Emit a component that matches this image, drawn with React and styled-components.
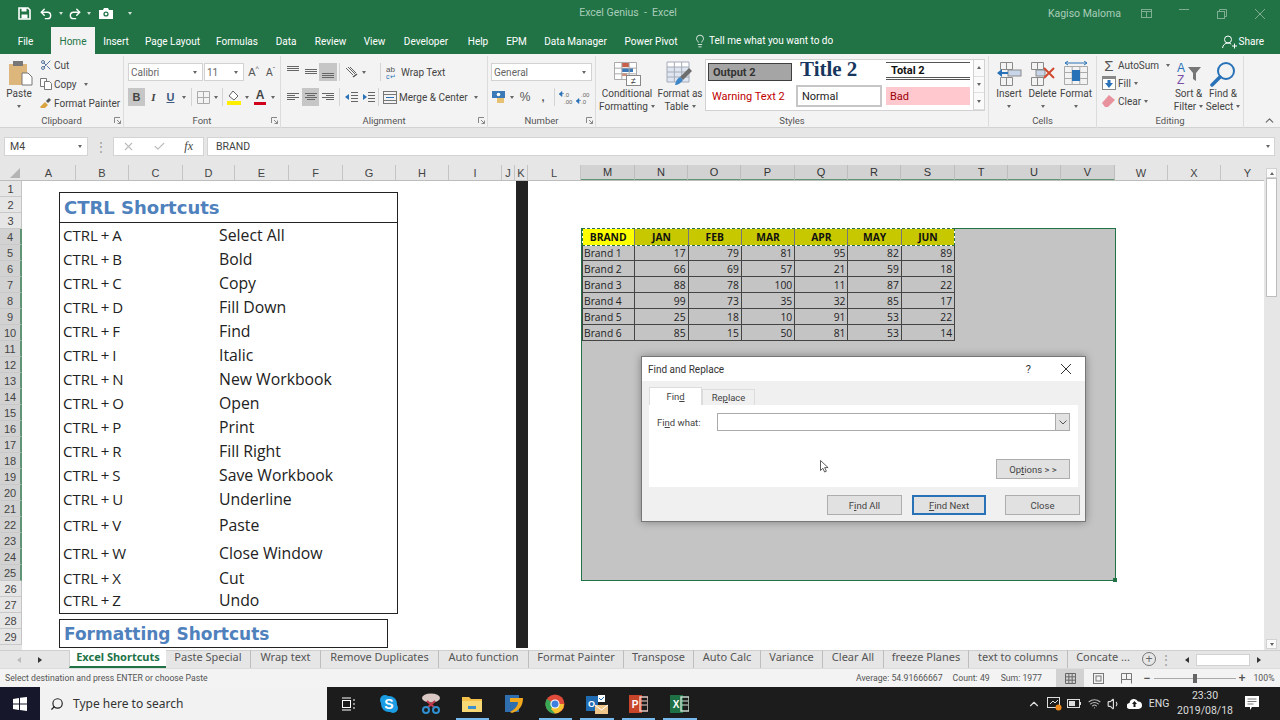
import React from 'react';
import styled, { createGlobalStyle } from 'styled-components';
import { Undo2, Redo2, Lightbulb, Search, ChevronUp, Volume1, Wifi, Scissors, Check, X } from 'lucide-react';

const UI = 'Roboto, "Noto Sans", sans-serif';
const NOTO = '"Noto Sans", "Open Sans", sans-serif';

const GlobalStyle = createGlobalStyle`
  html, body { margin: 0; padding: 0; background: #fff; }
  * { box-sizing: border-box; }
  svg { display: block; flex-shrink: 0; }
`;

// ===================== data ===================== //

const TABS = [
  ['File', 51], ['Home', 44, true], ['Insert', 42], ['Page Layout', 71], ['Formulas', 58], ['Data', 40],
  ['Review', 49], ['View', 39], ['Developer', 64], ['Help', 40], ['EPM', 37], ['Data Manager', 81], ['Power Pivot', 70],
];

const COLS = [
  ['A', 54], ['B', 53], ['C', 54], ['D', 52], ['E', 54], ['F', 54], ['G', 53], ['H', 53], ['I', 53], ['J', 13], ['K', 13], ['L', 53],
  ['M', 54, 1], ['N', 53, 1], ['O', 53, 1], ['P', 54, 1], ['Q', 53, 1], ['R', 53, 1], ['S', 54, 1], ['T', 53, 1], ['U', 53, 1], ['V', 54, 1],
  ['W', 53], ['X', 53], ['Y', 54],
];

const SHORTCUTS = [
  ['CTRL + A', 'Select All', 24], ['CTRL + B', 'Bold', 24], ['CTRL + C', 'Copy', 24], ['CTRL + D', 'Fill Down', 24],
  ['CTRL + F', 'Find', 24], ['CTRL + I', 'Italic', 24], ['CTRL + N', 'New Workbook', 24], ['CTRL + O', 'Open', 24],
  ['CTRL + P', 'Print', 24], ['CTRL + R', 'Fill Right', 24], ['CTRL + S', 'Save Workbook', 24], ['CTRL + U', 'Underline', 24],
  ['CTRL + V', 'Paste', 28], ['CTRL + W', 'Close Window', 28], ['CTRL + X', 'Cut', 20], ['CTRL + Z', 'Undo', 25],
];

const HEAD = ['BRAND', 'JAN', 'FEB', 'MAR', 'APR', 'MAY', 'JUN'];
const BRANDS = [
  ['Brand 1', 17, 79, 81, 95, 82, 89],
  ['Brand 2', 66, 69, 57, 21, 59, 18],
  ['Brand 3', 88, 78, 100, 11, 87, 22],
  ['Brand 4', 99, 73, 35, 32, 85, 17],
  ['Brand 5', 25, 18, 10, 91, 53, 22],
  ['Brand 6', 85, 15, 50, 81, 53, 14],
];

const SHEETS = [
  ['Excel Shortcuts', 97, true], ['Paste Special', 85], ['Wrap text', 70], ['Remove Duplicates', 118], ['Auto function', 90],
  ['Format Painter', 95], ['Transpose', 70], ['Auto Calc', 67], ['Variance', 62], ['Clear All', 61], ['freeze Planes', 85],
  ['text to columns', 99], ['Concate ...', 70],
];

// ===================== small drawings ===================== //

const Grid = ({ x, y, w, h, c = 3, r = 3, stroke = '#8a8a8a' }) => {
  const lines = [];
  for (let i = 0; i <= c; i++) lines.push(<line key={'c' + i} x1={x + (w * i) / c} x2={x + (w * i) / c} y1={y} y2={y + h} />);
  for (let i = 0; i <= r; i++) lines.push(<line key={'r' + i} x1={x} x2={x + w} y1={y + (h * i) / r} y2={y + (h * i) / r} />);
  return <g stroke={stroke} strokeWidth="1" fill="none">{lines}</g>;
};

const Bars = ({ rows }) => (
  <svg width="14" height="14" viewBox="0 0 14 14" stroke="#666" strokeWidth="1">
    {rows.map(([a, b, y]) => <line key={y} x1={a} x2={b} y1={y + 0.5} y2={y + 0.5} />)}
  </svg>
);

const SaveIcon = () => (
  <svg width="13" height="13" viewBox="0 0 13 13">
    <path d="M1 1h9l2 2v9H1z" fill="none" stroke="#fff" strokeWidth="1.6" />
    <rect x="3.5" y="1" width="5" height="3.5" fill="#fff" />
    <rect x="3.5" y="7.5" width="6" height="4" fill="#fff" />
  </svg>
);

const CameraIcon = () => (
  <svg width="14" height="11" viewBox="0 0 14 11">
    <path d="M0 2h4l1-2h4l1 2h4v9H0z" fill="#fff" />
    <circle cx="7" cy="6" r="2.6" fill="#217346" />
    <circle cx="7" cy="6" r="1.3" fill="#fff" />
  </svg>
);

const PasteIcon = () => (
  <svg width="24" height="25" viewBox="0 0 24 25">
    <rect x="0" y="3" width="18" height="21" fill="#dcb67a" />
    <rect x="4" y="0" width="10" height="5" fill="#777" />
    <path d="M13 12h6l4 4v8H13z" fill="#fff" stroke="#777" />
  </svg>
);

const CopyIcon = () => (
  <svg width="12" height="12" viewBox="0 0 12 12" fill="#fff" stroke="#777">
    <path d="M.5.5h6v8h-6z" /><path d="M4.5 3.5h5l2 2v6h-7z" />
  </svg>
);

const BrushIcon = () => (
  <svg width="12" height="12" viewBox="0 0 12 12">
    <path d="M0 10l5-5 3 3-3 3H1z" fill="#d9a441" />
    <path d="M6 4l3-3 2 2-3 3z" fill="#555" />
  </svg>
);

const BordersIcon = () => (
  <svg width="13" height="13" viewBox="0 0 13 13"><Grid x={0.5} y={0.5} w={12} h={12} c={2} r={2} stroke="#aaa" /></svg>
);

const FillIcon = () => (
  <svg width="14" height="15" viewBox="0 0 14 15">
    <path d="M6 1l5 5-4 4-5-4z" fill="#fff" stroke="#666" />
    <rect x="0" y="11" width="14" height="4" fill="#ffee00" />
  </svg>
);

const OrientationIcon = () => (
  <svg width="13" height="13" viewBox="0 0 13 13" fill="none" stroke="#666">
    <path d="M1 2l7 7M3 1l7 7M5 1l6 6" />
    <path d="M8 11l4-3" stroke="#555" strokeWidth="1.5" />
  </svg>
);

const IndentIcon = ({ flip }) => (
  <svg width="13" height="12" viewBox="0 0 13 12">
    <g stroke="#666"><path d="M6 1.5h7M6 4.5h7M6 7.5h7M6 10.5h7" /></g>
    <path d={flip ? 'M5 6L1 3v6z' : 'M0 6l4-3v6z'} fill="#2a72b8" />
  </svg>
);

const WrapIcon = () => (
  <svg width="12" height="15" viewBox="0 0 12 15">
    <text x="0" y="7" fontFamily="Liberation Sans, sans-serif" fontSize="8" fill="#555">ab</text>
    <text x="0" y="14" fontFamily="Liberation Sans, sans-serif" fontSize="7" fill="#2a72b8">c↵</text>
  </svg>
);

const MergeIcon = () => (
  <svg width="14" height="13" viewBox="0 0 14 13" fill="none" stroke="#777">
    <rect x=".5" y=".5" width="13" height="12" />
    <path d="M.5 3.5h13M.5 9.5h13" />
    <path d="M3 6.5h8" stroke="#2a72b8" />
  </svg>
);

const AccountIcon = () => (
  <svg width="14" height="14" viewBox="0 0 14 14">
    <rect x="0" y="1" width="13" height="7" fill="#3a7ab8" />
    <circle cx="6.5" cy="4.5" r="1.8" fill="#fff" />
    <rect x="5" y="8" width="7" height="5" fill="#e7c172" />
  </svg>
);

const DecimalIcon = ({ dir }) => (
  <svg width="15" height="13" viewBox="0 0 15 13">
    <text x="5" y="5.5" fontFamily="Liberation Sans, sans-serif" fontSize="6" fill="#666">{dir ? '.0' : '.00'}</text>
    <text x="5" y="12.5" fontFamily="Liberation Sans, sans-serif" fontSize="6" fill="#666">{dir ? '.00' : '.0'}</text>
    <path d={dir ? 'M0 3l3-2.5v5zM3 2.5h2' : 'M0 10l3-2.5v5zM3 9.5h2'} fill="#2a72b8" stroke="#2a72b8" strokeWidth=".6" />
  </svg>
);

const CondIcon = () => (
  <svg width="27" height="24" viewBox="0 0 27 24">
    <rect x="0.5" y="0.5" width="22" height="17" fill="#fff" />
    <rect x="8" y="1" width="7" height="4" fill="#c9604a" />
    <rect x="8" y="6" width="11" height="4" fill="#3b78b8" />
    <rect x="8" y="11" width="5" height="3" fill="#d98b70" />
    <Grid x={0.5} y={0.5} w={22} h={17} c={3} r={3} stroke="#aaa" />
    <rect x="12.5" y="13.5" width="14" height="10" fill="#fff" stroke="#888" />
    <text x="19.5" y="22" textAnchor="middle" fontFamily="Liberation Sans, sans-serif" fontSize="9" fill="#444">≠</text>
  </svg>
);

const TableIcon = () => (
  <svg width="28" height="25" viewBox="0 0 28 25">
    <rect x="1" y="1" width="22" height="20" fill="#dfe6f1" />
    <rect x="1" y="1" width="22" height="5" fill="#fff" />
    <Grid x={1} y={1} w={22} h={20} c={3} r={4} stroke="#a4acb8" />
    <path d="M14 16l9-9 3 3-9 9z" fill="#6d6d6d" />
    <path d="M9 24c1-5 3-7 5-8l3 3c-2 3-5 5-8 5z" fill="#3f86c9" />
  </svg>
);

const InsertIcon = () => (
  <svg width="25" height="24" viewBox="0 0 25 24">
    <Grid x={3.5} y={0.5} w={12} h={7} c={2} r={1} />
    <Grid x={3.5} y={15.5} w={12} h={8} c={2} r={1} />
    <rect x="11" y="8" width="13" height="6" fill="#c7d6e8" stroke="#8a8a8a" />
    <path d="M0 11l5-4v3h6v2H5v3z" fill="#2a72b8" />
  </svg>
);

const DeleteIcon = () => (
  <svg width="25" height="24" viewBox="0 0 25 24">
    <Grid x={1.5} y={0.5} w={12} h={7} c={2} r={1} />
    <Grid x={1.5} y={15.5} w={12} h={8} c={2} r={1} />
    <rect x="6" y="8" width="9" height="6" fill="#c7d6e8" stroke="#8a8a8a" />
    <path d="M14 6l10 10M24 6L14 16" stroke="#d0492f" strokeWidth="2" />
  </svg>
);

const FormatIcon = () => (
  <svg width="24" height="25" viewBox="0 0 24 25">
    <path d="M1 2h22M1 2l3-2M1 2l3 2M23 2l-3-2M23 2l-3 2" stroke="#2a72b8" fill="none" />
    <Grid x={0.5} y={5.5} w={23} h={18} c={3} r={3} stroke="#aaa" />
    <rect x="8" y="9" width="8" height="11" fill="#2a72b8" />
  </svg>
);

const FillDownIcon = () => (
  <svg width="14" height="14" viewBox="0 0 14 14">
    <rect x=".5" y=".5" width="13" height="13" fill="#fff" stroke="#888" />
    <rect x="0" y="0" width="14" height="3" fill="#888" />
    <path d="M7 12L3 7h2.5V4h3v3H11z" fill="#2a72b8" />
  </svg>
);

const EraserIcon = () => (
  <svg width="14" height="12" viewBox="0 0 14 12">
    <path d="M0 8l7-8 6 5-7 7H3z" fill="#e8929e" />
  </svg>
);

const SortIcon = () => (
  <svg width="26" height="25" viewBox="0 0 26 25">
    <text x="1" y="11" fontFamily="Liberation Sans, sans-serif" fontSize="12" fill="#2a72b8">A</text>
    <text x="1" y="23" fontFamily="Liberation Sans, sans-serif" fontSize="12" fill="#7a4fa8">Z</text>
    <path d="M12 6h13l-5 6v8l-3-2v-6z" fill="#777" />
  </svg>
);

const FindIcon = () => (
  <svg width="26" height="26" viewBox="0 0 26 26" fill="none">
    <circle cx="16" cy="10" r="8" stroke="#2a72b8" strokeWidth="2" />
    <path d="M10 16l-8 8" stroke="#2a72b8" strokeWidth="3.5" strokeLinecap="round" />
  </svg>
);

const ShareIcon = () => (
  <svg width="15" height="14" viewBox="0 0 15 14" fill="none" stroke="#fff">
    <circle cx="6" cy="4.5" r="3.5" /><path d="M.5 13c.5-3 2.5-5 5.5-5 1.5 0 2.5.5 3.2 1.2M10 11h5M12.5 8.5v5" />
  </svg>
);

const Launcher = () => (
  <svg width="7" height="7" viewBox="0 0 7 7" fill="none" stroke="#888">
    <path d="M.5 6V.5H6" /><path d="M3 3l3.5 3.5M6.5 3.5v3h-3" />
  </svg>
);

const WinLogo = () => (
  <svg width="14" height="14" viewBox="0 0 14 14" fill="#fff">
    <path d="M0 2l6-1v5.5H0zM7 .8L14 0v6.5H7zM0 7.5h6V13l-6-1zM7 7.5h7V14l-7-1z" />
  </svg>
);

const TaskView = () => (
  <svg width="14" height="14" viewBox="0 0 14 14" fill="none" stroke="#fff">
    <rect x="1.5" y="3.5" width="8" height="7" /><path d="M1 1h9M1 13h9M13 2v2M13 6v2M13 10v2" />
  </svg>
);

const Skype = () => (
  <svg width="20" height="20" viewBox="0 0 20 20">
    <circle cx="6" cy="6" r="5" fill="#1b9ce3" /><circle cx="14" cy="14" r="5" fill="#1b9ce3" /><circle cx="10" cy="10" r="8" fill="#1b9ce3" />
    <text x="10" y="15" textAnchor="middle" fontFamily="Liberation Sans, sans-serif" fontWeight="700" fontSize="14" fill="#fff">S</text>
  </svg>
);

const Snip = () => (
  <svg width="20" height="22" viewBox="0 0 20 22">
    <ellipse cx="10" cy="5" rx="9" ry="4.5" fill="#d9c8c4" />
    <path d="M6 8l8 7M14 8l-8 7" stroke="#c23b4c" strokeWidth="2" />
    <circle cx="5" cy="17" r="3" fill="none" stroke="#2f8fd0" strokeWidth="2" /><circle cx="15" cy="17" r="3" fill="none" stroke="#2f8fd0" strokeWidth="2" />
  </svg>
);

const Folder = () => (
  <svg width="20" height="16" viewBox="0 0 20 16">
    <path d="M0 1h7l2 2h11v13H0z" fill="#f3c14b" /><rect y="5" width="20" height="11" fill="#f8d775" />
    <rect x="6" y="10" width="8" height="3" fill="#3a8fd0" />
  </svg>
);

const Planner = () => (
  <svg width="20" height="20" viewBox="0 0 20 20">
    <rect x="1" y="1" width="14" height="17" fill="#2f6fb0" />
    <path d="M6 4h13c0 8-4 13-11 15l-2-1c6-3 8-7 8-10H6z" fill="#f2a81d" />
  </svg>
);

const Chrome = () => (
  <svg width="20" height="20" viewBox="0 0 20 20">
    <circle cx="10" cy="10" r="9.5" fill="#e04a3a" />
    <path d="M10 10L1.8 5A9.5 9.5 0 0 0 10 19.5l5-9.5z" fill="#3aa757" />
    <path d="M10 10h9a9.5 9.5 0 0 1-9 9.5L6 15z" fill="#f5c332" />
    <circle cx="10" cy="10" r="4.6" fill="#fff" /><circle cx="10" cy="10" r="3.5" fill="#3f7fe0" />
  </svg>
);

const Outlook = () => (
  <svg width="22" height="20" viewBox="0 0 22 20">
    <rect x="0" y="2" width="12" height="15" fill="#1f6cb3" />
    <text x="5.5" y="13" textAnchor="middle" fontFamily="Liberation Sans, sans-serif" fontWeight="700" fontSize="9" fill="#fff">O</text>
    <rect x="12" y="1" width="7" height="7" fill="#fff" /><path d="M13 4l2 2 3-3" stroke="#1f6cb3" fill="none" />
    <path d="M9 11h13v9H9z" fill="#f0c68a" /><path d="M9 11l6.5 5 6.5-5" fill="none" stroke="#fff" />
  </svg>
);

const Office = ({ bg, page, label }) => (
  <svg width="19" height="18" viewBox="0 0 19 18">
    <rect x="0" y="0" width="13" height="18" fill={bg} />
    <rect x="11" y="2" width="8" height="14" fill="none" stroke={page} strokeWidth="1.4" />
    <path d={`M12 6h6M12 10h6`} stroke={page} />
    <text x="6" y="13" textAnchor="middle" fontFamily="Liberation Sans, sans-serif" fontWeight="700" fontSize="10" fill="#fff">{label}</text>
  </svg>
);

const TrayMeter = () => (
  <svg width="15" height="15" viewBox="0 0 15 15" fill="none" stroke="#ddd">
    <rect x=".5" y="1.5" width="12" height="10" /><path d="M3 8l3-3 2 2 3-3" />
    <circle cx="11.5" cy="11.5" r="3" fill="#f08a1d" stroke="none" />
  </svg>
);

const Battery = () => (
  <svg width="14" height="9" viewBox="0 0 14 9">
    <rect x=".5" y=".5" width="12" height="8" fill="none" stroke="#ddd" /><rect x="2" y="2" width="6" height="5" fill="#ddd" /><rect x="13" y="3" width="1" height="3" fill="#ddd" />
  </svg>
);

const Cloud = () => (
  <svg width="15" height="11" viewBox="0 0 15 11">
    <path d="M3 11a3 3 0 0 1-.5-6A4.5 4.5 0 0 1 11 3.5 3.7 3.7 0 0 1 11.5 11z" fill="#fff" />
    <path d="M7.5 3L5 6h1.5v3h2V6H10z" fill="#1b1b1b" />
  </svg>
);

const Notif = () => (
  <svg width="15" height="15" viewBox="0 0 15 15">
    <path d="M0 0h14v11H7l-2 3v-3H0z" fill="#fff" /><path d="M2.5 3h9M2.5 5.5h9M2.5 8h6" stroke="#777" />
  </svg>
);

const Pointer = () => (
  <svg width="9" height="13" viewBox="0 0 9 13">
    <path d="M.5.5v10l2.4-2.2L4.6 12l1.8-.8-1.7-3.6h3.4z" fill="#fff" stroke="#333" strokeWidth=".8" />
  </svg>
);

// ===================== App ===================== //

function App() {
  const rows = Array.from({ length: 29 }, (_, i) => i + 1);
  return (
    <Page>
      <GlobalStyle />

      <TitleBar>
        <Qat>
          <QatSlot $w={24}><SaveIcon /></QatSlot>
          <QatSlot $w={20}><Undo2 size={14} color="#fff" strokeWidth={2.4} /></QatSlot>
          <QatSlot $w={10}><Caret $c="#cfe3d7" /></QatSlot>
          <QatSlot $w={18}><Redo2 size={14} color="#fff" strokeWidth={2.4} /></QatSlot>
          <QatSlot $w={10}><Caret $c="#cfe3d7" /></QatSlot>
          <QatSlot $w={24}><CameraIcon /></QatSlot>
          <QatSlot $w={24}><Caret $c="#cfe3d7" /></QatSlot>
        </Qat>
        <DocTitle>Excel Genius&nbsp; -&nbsp; Excel</DocTitle>
        <Account>Kagiso Maloma</Account>
        <WinControls>
          <WinBtn><svg width="11" height="9" viewBox="0 0 11 9" fill="none" stroke="#7fae93"><rect x=".5" y=".5" width="10" height="8" /><path d="M.5 2.5h10M5.5 2.5v6" /></svg></WinBtn>
          <WinBtn><svg width="10" height="1"><rect width="10" height="1" fill="#7fae93" /></svg></WinBtn>
          <WinBtn><svg width="10" height="10" viewBox="0 0 10 10" fill="none" stroke="#7fae93"><rect x=".5" y="2.5" width="7" height="7" /><path d="M2.5 2V.5h7v7H8" /></svg></WinBtn>
          <WinBtn><svg width="10" height="10" viewBox="0 0 10 10" stroke="#7fae93"><path d="M0 0l10 10M10 0L0 10" /></svg></WinBtn>
        </WinControls>
      </TitleBar>

      <TabBar>
        {TABS.map(([name, w, active]) => <Tab key={name} $w={w} $active={active}>{name}</Tab>)}
        <TellMe><Lightbulb size={14} color="#fff" strokeWidth={1.4} />Tell me what you want to do</TellMe>
        <Share><ShareIcon />Share</Share>
      </TabBar>

      <Ribbon>
        <Group $w={124}>
          <Body>
            <BigBtn $w={38}><BigIcon $shift={2}><PasteIcon /></BigIcon><BigText>Paste</BigText><BigText><Caret /></BigText></BigBtn>
            <Stack>
              <SmallRow><SmallIcon><Scissors size={12} color="#5a78a0" /></SmallIcon>Cut</SmallRow>
              <SmallRow><SmallIcon><CopyIcon /></SmallIcon>Copy<Caret $m={7} /></SmallRow>
              <SmallRow><SmallIcon><BrushIcon /></SmallIcon>Format Painter</SmallRow>
            </Stack>
          </Body>
          <GroupLabel>Clipboard<LaunchSpot><Launcher /></LaunchSpot></GroupLabel>
        </Group>

        <Group $w={157}>
          <Tools $left={4}>
            <ToolRow>
              <Combo $w={75}>Calibri<Caret /></Combo>
              <Combo $w={40} $ml={1}>11<Caret /></Combo>
              <IconBtn $w={17} $ml={1}><GrowA>A<sup>^</sup></GrowA></IconBtn>
              <IconBtn $w={17}><GrowA $small>A<sup>ˇ</sup></GrowA></IconBtn>
            </ToolRow>
            <ToolRow>
              <IconBtn $w={17} $on><FaceB>B</FaceB></IconBtn>
              <IconBtn $w={17}><FaceI>I</FaceI></IconBtn>
              <IconBtn $w={17}><FaceU>U</FaceU></IconBtn>
              <IconBtn $w={10}><Caret /></IconBtn>
              <Sep $m={2} />
              <IconBtn $w={18}><BordersIcon /></IconBtn>
              <IconBtn $w={8}><Caret /></IconBtn>
              <Sep $m={2} />
              <IconBtn $w={18}><FillIcon /></IconBtn>
              <IconBtn $w={8}><Caret /></IconBtn>
              <IconBtn $w={18}><FontColor>A</FontColor></IconBtn>
              <IconBtn $w={8}><Caret /></IconBtn>
            </ToolRow>
          </Tools>
          <GroupLabel>Font<LaunchSpot><Launcher /></LaunchSpot></GroupLabel>
        </Group>

        <Group $w={207}>
          <Tools $left={3}>
            <ToolRow>
              <IconBtn $w={18}><Bars rows={[[1, 13, 1], [1, 13, 3], [1, 13, 5]]} /></IconBtn>
              <IconBtn $w={17}><Bars rows={[[1, 13, 4], [1, 13, 6], [1, 13, 8]]} /></IconBtn>
              <IconBtn $w={18} $on><Bars rows={[[1, 13, 8], [1, 13, 10], [1, 13, 12]]} /></IconBtn>
              <Sep $m={2} />
              <IconBtn $w={18}><OrientationIcon /></IconBtn>
              <IconBtn $w={8}><Caret /></IconBtn>
              <Sep $m={3} $ml={12} />
              <SmallIcon $w={15}><WrapIcon /></SmallIcon>
              <PlainText $ml={1}>Wrap Text</PlainText>
            </ToolRow>
            <ToolRow>
              <IconBtn $w={18}><Bars rows={[[1, 13, 3], [1, 9, 5], [1, 13, 7], [1, 9, 9]]} /></IconBtn>
              <IconBtn $w={17} $on><Bars rows={[[1, 13, 3], [3, 11, 5], [1, 13, 7], [3, 11, 9]]} /></IconBtn>
              <IconBtn $w={18}><Bars rows={[[1, 13, 3], [5, 13, 5], [1, 13, 7], [5, 13, 9]]} /></IconBtn>
              <Sep $m={2} />
              <IconBtn $w={18}><IndentIcon /></IconBtn>
              <IconBtn $w={17}><IndentIcon flip /></IconBtn>
              <Sep $m={3} $ml={1} />
              <SmallIcon $w={15}><MergeIcon /></SmallIcon>
              <PlainText $ml={1}>Merge &amp; Center</PlainText>
              <Caret $m={6} />
            </ToolRow>
          </Tools>
          <GroupLabel>Alignment<LaunchSpot><Launcher /></LaunchSpot></GroupLabel>
        </Group>

        <Group $w={108}>
          <Tools $left={3}>
            <ToolRow><Combo $w={101}>General<Caret /></Combo></ToolRow>
            <ToolRow>
              <IconBtn $w={16}><AccountIcon /></IconBtn>
              <IconBtn $w={9}><Caret /></IconBtn>
              <IconBtn $w={18}><Percent>%</Percent></IconBtn>
              <IconBtn $w={18}><Percent $small>,</Percent></IconBtn>
              <Sep $m={2} />
              <IconBtn $w={18}><DecimalIcon dir /></IconBtn>
              <IconBtn $w={16}><DecimalIcon /></IconBtn>
            </ToolRow>
          </Tools>
          <GroupLabel>Number<LaunchSpot><Launcher /></LaunchSpot></GroupLabel>
        </Group>

        <Group $w={393}>
          <Body $left={3}>
            <BigBtn $w={56}><BigIcon><CondIcon /></BigIcon><BigText>Conditional</BigText><BigText>Formatting<Caret $m={3} /></BigText></BigBtn>
            <BigBtn $w={50}><BigIcon><TableIcon /></BigIcon><BigText>Format as</BigText><BigText>Table<Caret $m={3} /></BigText></BigBtn>
            <Gallery>
              <StyleCell $kind="output">Output 2</StyleCell>
              <StyleCell $kind="title">Title 2</StyleCell>
              <StyleCell $kind="total">Total 2</StyleCell>
              <StyleCell $kind="warning">Warning Text 2</StyleCell>
              <StyleCell $kind="normal">Normal</StyleCell>
              <StyleCell $kind="bad">Bad</StyleCell>
              <GalleryScroll>
                <GalleryArrow><Caret $up /></GalleryArrow>
                <GalleryArrow><Caret /></GalleryArrow>
                <GalleryArrow><Caret /></GalleryArrow>
              </GalleryScroll>
            </Gallery>
          </Body>
          <GroupLabel>Styles</GroupLabel>
        </Group>

        <Group $w={108}>
          <Body $left={3}>
            <BigBtn $w={34}><BigIcon><InsertIcon /></BigIcon><BigText>Insert</BigText><BigText><Caret /></BigText></BigBtn>
            <BigBtn $w={33}><BigIcon><DeleteIcon /></BigIcon><BigText>Delete</BigText><BigText><Caret /></BigText></BigBtn>
            <BigBtn $w={34}><BigIcon><FormatIcon /></BigIcon><BigText>Format</BigText><BigText><Caret /></BigText></BigBtn>
          </Body>
          <GroupLabel>Cells</GroupLabel>
        </Group>

        <Group $w={147} $last>
          <Body $left={4}>
            <EditStack>
              <SmallRow><SmallIcon $w={16}><Sigma>Σ</Sigma></SmallIcon>AutoSum<Caret $m={7} /></SmallRow>
              <SmallRow><SmallIcon $w={16}><FillDownIcon /></SmallIcon>Fill<Caret $m={3} /></SmallRow>
              <SmallRow><SmallIcon $w={16}><EraserIcon /></SmallIcon>Clear<Caret $m={3} /></SmallRow>
            </EditStack>
            <BigBtn $w={35}><BigIcon><SortIcon /></BigIcon><BigText>Sort &amp;</BigText><BigText>Filter<Caret $m={3} /></BigText></BigBtn>
            <BigBtn $w={34}><BigIcon><FindIcon /></BigIcon><BigText>Find &amp;</BigText><BigText>Select<Caret $m={3} /></BigText></BigBtn>
          </Body>
          <GroupLabel>Editing</GroupLabel>
        </Group>

        <Collapse><ChevronUp size={13} color="#666" /></Collapse>
      </Ribbon>

      <FormulaBar>
        <NameBox>M4<Caret /></NameBox>
        <GripDots>⋮</GripDots>
        <FormulaBtns>
          <X size={13} color="#bbb" />
          <Check size={13} color="#bbb" />
          <Fx>fx</Fx>
        </FormulaBtns>
        <FormulaInput>BRAND<Caret /></FormulaInput>
      </FormulaBar>

      <SheetArea>
        <SheetMain>
          <ColHeaders>
            <Corner />
            {COLS.map(([c, w, sel]) => <ColHead key={c} $w={w} $sel={sel}>{c}</ColHead>)}
          </ColHeaders>
          <SheetBody>
            <RowHeaders>
              {rows.map((n) => <RowHead key={n} $sel={n >= 4 && n <= 25}>{n}</RowHead>)}
            </RowHeaders>
            <Canvas>
              <BlackColumn />

              <ShortcutBox>
                <ShortcutTitle>CTRL Shortcuts</ShortcutTitle>
                {SHORTCUTS.map(([keys, what, h]) => (
                  <ShortcutRow key={keys} $h={h}><KeyName>{keys}</KeyName><span>{what}</span></ShortcutRow>
                ))}
              </ShortcutBox>

              <FormatBox>Formatting Shortcuts</FormatBox>

              <GreyShape>
                <DataTable>
                  <HeadRow>
                    {HEAD.map((h, i) => <HeadCell key={h} $first={i === 0}>{h}</HeadCell>)}
                  </HeadRow>
                  {BRANDS.map((row) => row.map((v, i) => (
                    <DataCell key={row[0] + i} $left={i === 0}>{v}</DataCell>
                  )))}
                </DataTable>
              </GreyShape>

              <Dialog>
                <DialogTitle>
                  Find and Replace
                  <DialogQ>?</DialogQ>
                  <svg width="10" height="10" viewBox="0 0 10 10" stroke="#333"><path d="M0 0l10 10M10 0L0 10" /></svg>
                </DialogTitle>
                <DialogBody>
                  <DialogTabs>
                    <DialogTab $active>Fin<u>d</u></DialogTab>
                    <DialogTab>Re<u>p</u>lace</DialogTab>
                  </DialogTabs>
                  <DialogPanel>
                    <FindRow>
                      <FindLabel>Fi<u>n</u>d what:</FindLabel>
                      <FindInput><FindDrop><svg width="8" height="5" viewBox="0 0 8 5" fill="none" stroke="#555"><path d="M.5.5L4 4 7.5.5" /></svg></FindDrop></FindInput>
                    </FindRow>
                    <OptionsRow><DlgButton $w={74} $h={20}>Op<u>t</u>ions &gt; &gt;</DlgButton></OptionsRow>
                    <CursorSpot><Pointer /></CursorSpot>
                  </DialogPanel>
                  <DialogButtons>
                    <DlgButton $w={75}>F<u>i</u>nd All</DlgButton>
                    <DlgButton $w={74} $ml={10} $primary><u>F</u>ind Next</DlgButton>
                    <DlgButton $w={75} $ml={19}>Close</DlgButton>
                  </DialogButtons>
                </DialogBody>
              </Dialog>
            </Canvas>
          </SheetBody>
        </SheetMain>
        <VScroll>
          <ScrollEnd><Caret $up /></ScrollEnd>
          <VThumb />
          <ScrollEnd><Caret /></ScrollEnd>
        </VScroll>
      </SheetArea>

      <SheetTabs>
        <TabNav><NavArrow $left $dim /><NavArrow /></TabNav>
        {SHEETS.map(([name, w, active], i) => (
          <SheetTab key={name} $w={w} $active={active} $noSep={i === 0 || i === SHEETS.length - 1}>{name}</SheetTab>
        ))}
        <AddSheet>+</AddSheet>
        <GripDots $w={20}>⋮</GripDots>
        <HScroll>
          <NavArrow $left />
          <HThumb />
          <NavArrow />
        </HScroll>
      </SheetTabs>

      <StatusBar>
        <StatusText>Select destination and press ENTER or choose Paste</StatusText>
        <Stat $ml="auto">Average: 54.91666667</Stat>
        <Stat $ml="10px">Count: 49</Stat>
        <Stat $ml="11px">Sum: 1977</Stat>
        <ViewBtn $ml={14} $on><svg width="11" height="11" viewBox="0 0 11 11"><Grid x={0.5} y={0.5} w={10} h={10} c={3} r={3} stroke="#666" /></svg></ViewBtn>
        <ViewBtn><svg width="11" height="11" viewBox="0 0 11 11" fill="none" stroke="#777"><rect x=".5" y=".5" width="10" height="10" /><rect x="3" y="3" width="5" height="5" /></svg></ViewBtn>
        <ViewBtn><svg width="11" height="11" viewBox="0 0 11 11" fill="none" stroke="#777"><path d="M.5 10.5V.5h10v10M5.5.5v6M.5 6.5h10" /></svg></ViewBtn>
        <ZoomMinus>−</ZoomMinus>
        <ZoomTrack><ZoomKnob /></ZoomTrack>
        <ZoomPlus>+</ZoomPlus>
        <ZoomPct>100%</ZoomPct>
      </StatusBar>

      <Taskbar>
        <StartBtn><WinLogo /></StartBtn>
        <SearchBox><SearchGlyph><Search size={14} color="#222" /></SearchGlyph>Type here to search</SearchBox>
        <Slot><TaskView /></Slot>
        <Slot><Skype /></Slot>
        <Slot><Snip /></Slot>
        <Slot $active><Folder /></Slot>
        <Slot><Planner /></Slot>
        <Slot $active><Chrome /></Slot>
        <Slot $active><Outlook /></Slot>
        <Slot $active><Office bg="#c8452a" page="#f2d2c8" label="P" /></Slot>
        <Slot $active><Office bg="#1d7144" page="#cfe6d8" label="X" /></Slot>
        <Tray>
          <TraySlot><ChevronUp size={14} color="#ddd" /></TraySlot>
          <TraySlot><TrayMeter /></TraySlot>
          <TraySlot><Battery /></TraySlot>
          <TraySlot><Wifi size={13} color="#bbb" /></TraySlot>
          <TraySlot><Volume1 size={14} color="#ddd" /></TraySlot>
          <TraySlot><Cloud /></TraySlot>
          <TraySlot $w={30}>ENG</TraySlot>
          <Clock><span>23:30</span><span>2019/08/18</span></Clock>
          <TraySlot $w={32}><Notif /></TraySlot>
          <TraySlot $w={12} />
        </Tray>
      </Taskbar>
    </Page>
  );
}

// ===================== CSS styled-components ===================== //

const Page = styled.div`
  width: 1280px;
  height: 720px;
  overflow: hidden;
  display: flex;
  flex-direction: column;
  font-family: ${UI};
  color: #444;
  background: #e6e6e6;
`;

const Caret = styled.span`
  display: inline-block;
  width: 0;
  height: 0;
  flex-shrink: 0;
  margin-left: ${(p) => p.$m || 0}px;
  border-left: 2.5px solid transparent;
  border-right: 2.5px solid transparent;
  ${(p) => (p.$up ? 'border-bottom' : 'border-top')}: 3px solid ${(p) => p.$c || '#666'};
  vertical-align: middle;
`;

const TitleBar = styled.div`
  height: 27px;
  background: #217346;
  display: flex;
  align-items: center;
  position: relative;
  color: #a9cdb8;
  font-size: 10.5px;
`;

const Qat = styled.div`
  display: flex;
  align-items: center;
  padding-left: 12px;
`;

const QatSlot = styled.div`
  width: ${(p) => p.$w}px;
  display: flex;
  justify-content: center;
`;

const DocTitle = styled.div`
  position: absolute;
  left: 0;
  right: 0;
  top: 6px;
  padding-right: 24px;
  text-align: center;
  white-space: pre;
`;

const Account = styled.div`
  margin-left: auto;
  margin-right: 6px;
`;

const WinControls = styled.div`
  display: flex;
  width: 153px;
`;

const WinBtn = styled.div`
  width: 38px;
  display: flex;
  justify-content: center;
`;

const TabBar = styled.div`
  height: 27px;
  background: #217346;
  display: flex;
  align-items: stretch;
  color: #fff;
  font-size: 10px;
`;

const Tab = styled.div`
  width: ${(p) => p.$w}px;
  display: flex;
  align-items: center;
  justify-content: center;
  background: ${(p) => (p.$active ? '#f3f3f3' : 'transparent')};
  color: ${(p) => (p.$active ? '#217346' : '#fff')};
  padding-top: 1px;
`;

const TellMe = styled.div`
  display: flex;
  align-items: center;
  gap: 2px;
  margin-left: 7px;
`;

const Share = styled.div`
  display: flex;
  align-items: center;
  gap: 2px;
  margin-left: auto;
  margin-right: 16px;
  padding-top: 2px;
`;

const Ribbon = styled.div`
  height: 74px;
  background: #f3f3f3;
  border-bottom: 1px solid #d2d2d2;
  display: flex;
  position: relative;
  font-size: 10px;
  color: #444;
`;

const Group = styled.div`
  width: ${(p) => p.$w}px;
  height: 72px;
  margin-top: 2px;
  display: flex;
  flex-direction: column;
  border-right: 1px solid #dcdcdc;
`;

const Body = styled.div`
  height: 58px;
  display: flex;
  padding-left: ${(p) => p.$left || 0}px;
`;

const Tools = styled.div`
  height: 58px;
  display: flex;
  flex-direction: column;
  gap: 7px;
  padding: 7px 0 0 ${(p) => p.$left || 0}px;
`;

const ToolRow = styled.div`
  display: flex;
  align-items: center;
  height: 18px;
`;

const GroupLabel = styled.div`
  position: relative;
  height: 14px;
  line-height: 14px;
  text-align: center;
  font-size: 9.5px;
  color: #555;
`;

const LaunchSpot = styled.span`
  position: absolute;
  right: 2px;
  top: 3px;
`;

const BigBtn = styled.div`
  width: ${(p) => p.$w}px;
  display: flex;
  flex-direction: column;
  align-items: center;
  padding-top: 4px;
`;

const BigIcon = styled.div`
  height: 27px;
  display: flex;
  align-items: center;
  justify-content: center;
  margin-left: ${(p) => (p.$shift || 0) * 2}px;
`;

const BigText = styled.div`
  height: 13px;
  line-height: 13px;
  white-space: nowrap;
  display: flex;
  align-items: center;
  justify-content: center;
`;

const Stack = styled.div`
  display: flex;
  flex-direction: column;
  gap: 1px;
  padding-left: 1px;
`;

const EditStack = styled.div`
  width: 70px;
  display: flex;
  flex-direction: column;
`;

const SmallRow = styled.div`
  height: 18px;
  display: flex;
  align-items: center;
  white-space: nowrap;
`;

const SmallIcon = styled.div`
  width: ${(p) => p.$w || 14}px;
  display: flex;
  justify-content: center;
  margin-right: 1px;
`;

const PlainText = styled.span`
  margin-left: ${(p) => p.$ml || 0}px;
  white-space: nowrap;
`;

const Combo = styled.div`
  width: ${(p) => p.$w}px;
  height: 18px;
  margin-left: ${(p) => p.$ml || 0}px;
  padding: 0 5px 0 2px;
  background: #fff;
  border: 1px solid #d2d2d2;
  display: flex;
  align-items: center;
  justify-content: space-between;
  color: #666;
`;

const IconBtn = styled.div`
  width: ${(p) => p.$w}px;
  height: 18px;
  margin-left: ${(p) => p.$ml || 0}px;
  display: flex;
  align-items: center;
  justify-content: center;
  background: ${(p) => (p.$on ? '#c6c6c6' : 'transparent')};
`;

const Sep = styled.div`
  width: 1px;
  height: 18px;
  flex-shrink: 0;
  background: #d4d4d4;
  margin-left: ${(p) => (p.$ml !== undefined ? p.$ml : p.$m)}px;
  margin-right: ${(p) => p.$m}px;
`;

const GrowA = styled.span`
  font-family: "Liberation Sans", sans-serif;
  font-size: ${(p) => (p.$small ? 10 : 11)}px;
  color: #555;
  sup { font-size: 7px; line-height: 0; }
`;

const FaceB = styled.span`
  font: 700 11px "Liberation Sans", sans-serif;
  color: #444;
`;

const FaceI = styled.span`
  font: italic 700 11px "Liberation Serif", serif;
  color: #444;
`;

const FaceU = styled.span`
  font: 700 11px "Liberation Sans", sans-serif;
  color: #3c5a80;
  text-decoration: underline;
`;

const FontColor = styled.span`
  font: 700 12px/13px "Liberation Sans", sans-serif;
  color: #444;
  border-bottom: 3px solid #d0021b;
  padding: 0 2px;
`;

const Percent = styled.span`
  font: ${(p) => (p.$small ? '700 11px' : '12px')} "Liberation Sans", sans-serif;
  color: #555;
`;

const Gallery = styled.div`
  width: 280px;
  height: 52px;
  margin-top: 3px;
  background: #fff;
  border: 1px solid #d2d2d2;
  display: grid;
  grid-template-columns: 88px 90px 89px 11px;
  grid-template-rows: 25px 25px;
  position: relative;
`;

const CELL_STYLES = {
  output: 'margin: 3px 2px 4px; background: #a5a5a5; border: 1px solid #3f3f3f; font-weight: 700; color: #333; padding-left: 4px;',
  title: 'font-family: "Liberation Serif", serif; font-weight: 700; font-size: 21px; line-height: 19px; color: #17365d; padding: 0 0 6px 6px;',
  total: 'margin: 2px 3px 5px 2px; border-top: 1px solid #555; border-bottom: 3px double #555; font-weight: 700; color: #111; padding-left: 5px;',
  warning: 'color: #c00000; padding: 0 0 3px 6px;',
  normal: 'margin: 0 2px 3px 2px; border: 2px solid #c6c6c6; color: #222; padding-left: 4px;',
  bad: 'margin: 2px 3px 5px 2px; background: #ffc7ce; color: #9c0006; padding-left: 4px;',
};

const StyleCell = styled.div`
  display: flex;
  align-items: center;
  font-size: 11px;
  white-space: nowrap;
  ${(p) => CELL_STYLES[p.$kind]}
`;

const GalleryScroll = styled.div`
  grid-column: 4;
  grid-row: 1 / 3;
  display: flex;
  flex-direction: column;
  border-left: 1px solid #d2d2d2;
`;

const GalleryArrow = styled.div`
  flex: 1;
  display: flex;
  align-items: center;
  justify-content: center;
  border-bottom: 1px solid #e0e0e0;
  background: #fafafa;
`;

const Sigma = styled.span`
  font: 15px "Liberation Sans", sans-serif;
  color: #555;
`;

const Collapse = styled.div`
  position: absolute;
  right: 4px;
  bottom: 0;
`;

const FormulaBar = styled.div`
  height: 37px;
  padding: 9px 5px 9px 4px;
  display: flex;
  align-items: stretch;
  font-size: 10.5px;
  background: #e6e6e6;
`;

const NameBox = styled.div`
  width: 84px;
  background: #fff;
  border: 1px solid #d4d4d4;
  padding: 0 5px;
  display: flex;
  align-items: center;
  justify-content: space-between;
`;

const GripDots = styled.div`
  width: ${(p) => p.$w || 25}px;
  display: flex;
  align-items: center;
  justify-content: center;
  color: #999;
  font-size: 12px;
`;

const FormulaBtns = styled.div`
  width: 91px;
  background: #fff;
  border: 1px solid #d4d4d4;
  display: flex;
  align-items: center;
  justify-content: space-between;
  padding: 0 10px 0 8px;
`;

const Fx = styled.span`
  font: italic 12px "Liberation Serif", serif;
  color: #444;
`;

const FormulaInput = styled.div`
  flex: 1;
  margin-left: 3px;
  background: #fff;
  border: 1px solid #d4d4d4;
  padding: 0 4px 0 8px;
  display: flex;
  align-items: center;
  justify-content: space-between;
`;

const SheetArea = styled.div`
  height: 485px;
  display: flex;
`;

const SheetMain = styled.div`
  width: 1264px;
  display: flex;
  flex-direction: column;
`;

const ColHeaders = styled.div`
  height: 16px;
  display: flex;
  overflow: hidden;
  background: #e6e6e6;
  border-bottom: 1px solid #bdbdbd;
`;

const Corner = styled.div`
  width: 22px;
  flex-shrink: 0;
  position: relative;
  &::after {
    content: '';
    position: absolute;
    right: 2px;
    bottom: 2px;
    border-left: 10px solid transparent;
    border-bottom: 10px solid #b4b4b4;
  }
`;

const ColHead = styled.div`
  width: ${(p) => p.$w}px;
  flex-shrink: 0;
  height: ${(p) => (p.$sel ? 16 : 15)}px;
  display: flex;
  align-items: center;
  justify-content: center;
  font: 11px "Liberation Sans", sans-serif;
  color: ${(p) => (p.$sel ? '#333' : '#444')};
  background: ${(p) => (p.$sel ? '#d2d2d2' : 'transparent')};
  border-right: 1px solid ${(p) => (p.$sel ? '#bdbdbd' : '#c4c4c4')};
  border-bottom: ${(p) => (p.$sel ? '2px solid #5f9475' : '0')};
`;

const SheetBody = styled.div`
  flex: 1;
  min-height: 0;
  display: flex;
`;

const RowHeaders = styled.div`
  width: 22px;
  overflow: hidden;
  background: #e6e6e6;
`;

const RowHead = styled.div`
  height: 16px;
  display: flex;
  align-items: center;
  justify-content: center;
  font: 11px "Liberation Sans", sans-serif;
  color: #444;
  background: ${(p) => (p.$sel ? '#d2d2d2' : 'transparent')};
  border-bottom: 1px solid #c9c9c9;
  border-right: ${(p) => (p.$sel ? '2px solid #5f9475' : '1px solid #c4c4c4')};
`;

const Canvas = styled.div`
  flex: 1;
  position: relative;
  overflow: hidden;
  background: #fff;
`;

const BlackColumn = styled.div`
  position: absolute;
  left: 494px;
  top: 0;
  bottom: 2px;
  width: 12px;
  background: #222;
`;

const ShortcutBox = styled.div`
  position: absolute;
  left: 37px;
  top: 11px;
  width: 339px;
  height: 422px;
  border: 1.5px solid #222;
  background: #fff;
`;

const ShortcutTitle = styled.div`
  height: 30px;
  padding-left: 4px;
  display: flex;
  align-items: center;
  border-bottom: 1.5px solid #222;
  font: 700 18px "DejaVu Sans", sans-serif;
  color: #4f81bd;
`;

const ShortcutRow = styled.div`
  height: ${(p) => p.$h}px;
  display: grid;
  grid-template-columns: 156px 1fr;
  align-items: center;
  padding-left: 3px;
  font: 15.8px "Open Sans", sans-serif;
  color: #222;
`;

const KeyName = styled.span`
  font-size: 15px;
  word-spacing: -1px;
`;

const FormatBox = styled.div`
  position: absolute;
  left: 37px;
  top: 438px;
  width: 329px;
  height: 29px;
  border: 1.5px solid #222;
  padding-left: 4px;
  display: flex;
  align-items: center;
  background: #fff;
  font: 700 17px "DejaVu Sans", sans-serif;
  color: #4f81bd;
`;

const GreyShape = styled.div`
  position: absolute;
  left: 559px;
  top: 47px;
  width: 535px;
  height: 353px;
  background: #c4c4c4;
  border: 1px solid #217346;
  &::after {
    content: '';
    position: absolute;
    right: -2px;
    bottom: -2px;
    width: 4px;
    height: 4px;
    background: #217346;
  }
`;

const DataTable = styled.div`
  display: grid;
  grid-template-columns: repeat(7, 53.3px);
  grid-auto-rows: 16px;
  width: 373px;
  font: 10.3px "Open Sans", sans-serif;
  color: #222;
`;

const HeadRow = styled.div`
  grid-column: 1 / 8;
  display: grid;
  grid-template-columns: repeat(7, 53.3px);
  position: relative;
  &::before, &::after {
    content: '';
    position: absolute;
    inset: -1px 0 -1px 0;
    pointer-events: none;
  }
  &::before { border: 1.5px solid #fff; }
  &::after { border: 1.5px dashed #2b6f49; }
`;

const HeadCell = styled.div`
  display: flex;
  align-items: center;
  justify-content: center;
  font-weight: 700;
  color: #111;
  background: ${(p) => (p.$first ? '#ffff00' : '#c8c800')};
  border-right: 1px solid #777;
`;

const DataCell = styled.div`
  display: flex;
  align-items: center;
  justify-content: ${(p) => (p.$left ? 'flex-start' : 'flex-end')};
  padding: 0 2px 0 ${(p) => (p.$left ? 1 : 2)}px;
  border-right: 1px solid #444;
  border-bottom: 1px solid #444;
  ${(p) => (p.$left ? 'border-left: 1px solid #444;' : '')}
`;

const Dialog = styled.div`
  position: absolute;
  left: 619px;
  top: 175px;
  width: 445px;
  height: 166px;
  background: #f0f0f0;
  border: 1px solid #777;
  box-shadow: 0 0 8px rgba(0, 0, 0, 0.35);
  display: flex;
  flex-direction: column;
  font-size: 9.5px;
  color: #444;
`;

const DialogTitle = styled.div`
  height: 24px;
  background: #fff;
  padding: 0 14px 0 6px;
  display: flex;
  align-items: center;
  font-size: 10px;
  color: #333;
`;

const DialogQ = styled.span`
  margin-left: auto;
  margin-right: 30px;
  font-size: 11px;
`;

const DialogBody = styled.div`
  flex: 1;
  padding: 6px 7px 0 7px;
  display: flex;
  flex-direction: column;
`;

const DialogTabs = styled.div`
  display: flex;
  align-items: flex-end;
  height: 18px;
`;

const DialogTab = styled.div`
  width: 53px;
  height: ${(p) => (p.$active ? 18 : 16)}px;
  display: flex;
  align-items: center;
  justify-content: center;
  background: ${(p) => (p.$active ? '#fff' : '#f0f0f0')};
  border: 1px solid #dcdcdc;
  border-bottom: 0;
`;

const DialogPanel = styled.div`
  height: 82px;
  background: #fff;
  padding: 8px 8px 0 8px;
  position: relative;
`;

const FindRow = styled.div`
  display: flex;
  align-items: center;
  height: 18px;
`;

const FindLabel = styled.div`
  width: 60px;
  white-space: nowrap;
`;

const FindInput = styled.div`
  flex: 1;
  height: 18px;
  border: 1px solid #aaa;
  display: flex;
  justify-content: flex-end;
`;

const FindDrop = styled.div`
  width: 14px;
  background: #e2e2e2;
  border-left: 1px solid #aaa;
  display: flex;
  align-items: center;
  justify-content: center;
`;

const OptionsRow = styled.div`
  display: flex;
  justify-content: flex-end;
  margin-top: 28px;
`;

const DlgButton = styled.div`
  width: ${(p) => p.$w}px;
  height: ${(p) => p.$h || 20}px;
  margin-left: ${(p) => p.$ml || 0}px;
  display: flex;
  align-items: center;
  justify-content: center;
  white-space: pre;
  background: #e1e1e1;
  border: 1px solid ${(p) => (p.$primary ? '#2a72b8' : '#adadad')};
  ${(p) => (p.$primary ? 'box-shadow: inset 0 0 0 1px #2a72b8;' : '')}
`;

const DialogButtons = styled.div`
  display: flex;
  justify-content: flex-end;
  margin-top: 8px;
  margin-right: -2px;
`;

const CursorSpot = styled.div`
  position: absolute;
  left: 171px;
  top: 55px;
`;

const VScroll = styled.div`
  width: 16px;
  padding: 3px 3px 1px 2px;
  display: flex;
  flex-direction: column;
  background: #e6e6e6;
`;

const ScrollEnd = styled.div`
  height: 10px;
  display: flex;
  align-items: center;
  justify-content: center;
  background: #fafafa;
  border: 1px solid #d2d2d2;
`;

const VThumb = styled.div`
  height: 119px;
  margin-bottom: auto;
  background: #fff;
  border: 1px solid #bdbdbd;
`;

const SheetTabs = styled.div`
  height: 18px;
  display: flex;
  align-items: stretch;
  background: #e6e6e6;
  border-top: 1px solid #cfcfcf;
  font-family: ${NOTO};
  font-size: 11px;
  color: #555;
`;

const TabNav = styled.div`
  width: 69px;
  padding: 0 27px 0 17px;
  display: flex;
  align-items: center;
  justify-content: space-between;
`;

const NavArrow = styled.span`
  width: 0;
  height: 0;
  flex-shrink: 0;
  border-top: 3px solid transparent;
  border-bottom: 3px solid transparent;
  ${(p) => (p.$left ? 'border-right' : 'border-left')}: 4px solid ${(p) => (p.$dim ? '#bbb' : '#333')};
`;

const SheetTab = styled.div`
  width: ${(p) => p.$w}px;
  flex-shrink: 0;
  margin-top: -1px;
  padding-bottom: 6px;
  display: flex;
  align-items: center;
  justify-content: center;
  white-space: nowrap;
  background: ${(p) => (p.$active ? '#fff' : 'transparent')};
  color: ${(p) => (p.$active ? '#217346' : '#555')};
  font-weight: ${(p) => (p.$active ? 700 : 400)};
  ${(p) => (p.$active ? 'border-bottom: 2px solid #217346; border-left: 1px solid #cfcfcf; padding-bottom: 4px;' : '')}
  ${(p) => (p.$noSep ? '' : 'border-right: 1px solid #bdbdbd;')}
`;

const AddSheet = styled.div`
  width: 14px;
  height: 14px;
  margin: 1px 0 0 4px;
  border: 1px solid #777;
  border-radius: 50%;
  display: flex;
  align-items: center;
  justify-content: center;
  font: 12px/1 "Liberation Sans", sans-serif;
  color: #666;
`;

const HScroll = styled.div`
  width: 86px;
  margin-left: 5px;
  padding: 2px 6px 2px 4px;
  display: flex;
  align-items: center;
  justify-content: space-between;
`;

const HThumb = styled.div`
  width: 54px;
  height: 12px;
  background: #fff;
  border: 1px solid #d2d2d2;
`;

const StatusBar = styled.div`
  height: 19px;
  background: #f3f3f3;
  border-top: 1px solid #dcdcdc;
  display: flex;
  align-items: center;
  padding-left: 5px;
  font-size: 8.7px;
  color: #555;
`;

const StatusText = styled.span`
  white-space: nowrap;
`;

const Stat = styled.span`
  margin-left: ${(p) => p.$ml};
  white-space: nowrap;
`;

const ViewBtn = styled.div`
  width: 28px;
  height: 18px;
  margin-left: ${(p) => p.$ml || 0}px;
  display: flex;
  align-items: center;
  justify-content: center;
  background: ${(p) => (p.$on ? '#d2d2d2' : 'transparent')};
`;

const ZoomMinus = styled.span`
  width: 14px;
  text-align: center;
  font: 700 11px "Liberation Sans", sans-serif;
  color: #555;
`;

const ZoomTrack = styled.div`
  width: 82px;
  height: 1px;
  background: #aaa;
  position: relative;
`;

const ZoomKnob = styled.div`
  position: absolute;
  left: 39px;
  top: -4px;
  width: 4px;
  height: 9px;
  background: #666;
`;

const ZoomPlus = styled.span`
  width: 12px;
  text-align: center;
  font: 700 12px "Liberation Sans", sans-serif;
  color: #555;
`;

const ZoomPct = styled.span`
  width: 32px;
  text-align: center;
`;

const Taskbar = styled.div`
  height: 33px;
  background: #1c1c1c;
  display: flex;
  align-items: stretch;
`;

const StartBtn = styled.div`
  width: 40px;
  background: #17172b;
  display: flex;
  align-items: center;
  justify-content: center;
`;

const SearchBox = styled.div`
  width: 287px;
  background: #f2f2f2;
  display: flex;
  align-items: center;
  gap: 9px;
  padding-left: 10px;
  font-family: ${NOTO};
  font-size: 12px;
  color: #333;
`;

const SearchGlyph = styled.span`
  display: block;
  transform: scaleX(-1);
`;

const Slot = styled.div`
  width: 41.5px;
  display: flex;
  align-items: center;
  justify-content: center;
  padding: 0 3px;
  position: relative;
  &::after {
    content: '';
    position: absolute;
    left: 4px;
    right: 4px;
    bottom: 0;
    height: 2px;
    background: ${(p) => (p.$active ? '#76b9ed' : 'transparent')};
  }
`;

const Tray = styled.div`
  margin-left: auto;
  display: flex;
  align-items: stretch;
  color: #ddd;
  font-size: 10.5px;
`;

const TraySlot = styled.div`
  width: ${(p) => p.$w || 20}px;
  display: flex;
  align-items: center;
  justify-content: center;
`;

const Clock = styled.div`
  width: 62px;
  display: flex;
  flex-direction: column;
  align-items: center;
  justify-content: center;
  gap: 3px;
  line-height: 12px;
`;

export default App;
